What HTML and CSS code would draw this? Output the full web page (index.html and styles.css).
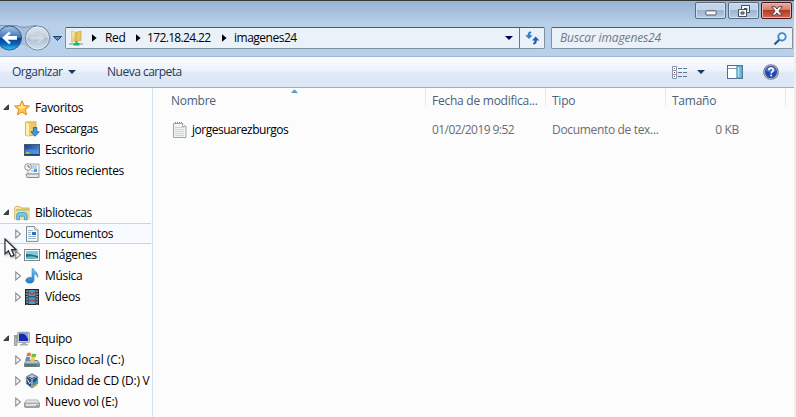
FILE: index.html
```html
<!DOCTYPE html>
<html lang="es">
<head>
<meta charset="utf-8">
<title>imagenes24</title>
<link rel="stylesheet" href="styles.css">
</head>
<body>
<svg width="0" height="0" class="defs" aria-hidden="true">
  <defs>
    <linearGradient id="gold" x1="0" y1="0" x2="1" y2="1"><stop offset="0" stop-color="#fff3b8"/><stop offset="1" stop-color="#e3b94c"/></linearGradient>
    <linearGradient id="blue" x1="0" y1="0" x2="1" y2="1"><stop offset="0" stop-color="#123d92"/><stop offset="1" stop-color="#5aa5e6"/></linearGradient>
    <linearGradient id="sky" x1="0" y1="0" x2="0" y2="1"><stop offset="0" stop-color="#6fc9ef"/><stop offset="1" stop-color="#1f78c4"/></linearGradient>
    <linearGradient id="ball" x1="0" y1="0" x2="0" y2="1"><stop offset="0" stop-color="#a8c6e8"/><stop offset=".48" stop-color="#3874bb"/><stop offset=".5" stop-color="#063d92"/><stop offset=".75" stop-color="#0b62bd"/><stop offset="1" stop-color="#31d0fa"/></linearGradient>
    <linearGradient id="glass" x1="0" y1="0" x2="0" y2="1"><stop offset="0" stop-color="#dce6f1"/><stop offset=".48" stop-color="#c3d0df"/><stop offset=".5" stop-color="#aabccf"/><stop offset="1" stop-color="#d4e2f0"/></linearGradient>
    <linearGradient id="metal" x1="0" y1="0" x2="0" y2="1"><stop offset="0" stop-color="#f4f4f4"/><stop offset="1" stop-color="#b4b8bb"/></linearGradient>
    <symbol id="open" viewBox="0 0 7 7"><path d="M5.5.8v4.7H.8z" fill="#454545" stroke="#222" stroke-width=".8"/></symbol>
    <symbol id="closed" viewBox="0 0 7 9"><path d="M1.5.9v7.2L5.7 4.5z" fill="#fff" stroke="#8e8e8e"/></symbol>
  </defs>
</svg>
<div class="window">
  <header class="titlebar">
    <div class="caption min"><svg width="12" height="6"><rect x=".8" y=".8" width="10.4" height="4.2" rx="1" fill="#f7f7f7" stroke="#525b68"/></svg></div>
    <div class="caption max"><svg width="13" height="12"><path d="M4.5.5h8v7h-3v4h-8v-7h3z" fill="#f4f6f8" stroke="#454e5c"/><path d="M7 3.5h3v2M4.5 4.5h5v3" fill="none" stroke="#454e5c"/><path d="M4 7h3v2H4z" fill="#8aa4c0" stroke="#454e5c"/></svg></div>
    <div class="caption close"><svg width="12" height="10"><path d="M.7.7h3.4L6 3 7.9.7h3.4L8 5l3.3 4.2H7.9L6 7 4.1 9.2H.7L4 5z" fill="#f7f3f2" stroke="#57424a"/></svg></div>
  </header>
  <div class="navbar">
    <svg class="history" width="65" height="30" viewBox="0 0 65 30">
      <path d="M0 3h37c9 0 14 5 14 12s-5 11-14 11c-9 0-10-4-15-4S10 27 0 26z" fill="#a9bed8"/>
      <path d="M0 2.5h15c4 0 5 2 9 2s6-2 13-2" fill="none" stroke="#7f98b8"/>
      <circle cx="9.5" cy="15" r="12" fill="url(#ball)" stroke="#36587f"/>
      <path d="M2 14.7l7-6 1.8 1.8L7.6 13H17v3.8H7.6l3.2 2.7L9 21.2z" fill="#fff"/>
      <circle cx="37.5" cy="15" r="12" fill="url(#glass)" stroke="#6e839e"/>
      <circle cx="37.5" cy="15" r="11" fill="none" stroke="#e9f1fa" opacity=".7"/>
      <path d="M45 14.7l-7-6-1.8 1.8 3.2 2.5H30v3.8h9.4l-3.2 2.7 1.8 1.7z" fill="#d0dae5" stroke="#b3c1d0" stroke-width=".6"/>
      <path d="M53.5 13.5h8l-4 4z" fill="#4f91c8" stroke="#153f70"/>
    </svg>
    <div class="address">
      <svg class="share" width="16" height="17" viewBox="0 0 16 17"><path d="M1 14h14" stroke="#b7c0c4" stroke-width="2"/><path d="M3.5.8L8 2.3V11l-4.5 1z" fill="url(#gold)" stroke="#d5b55a" stroke-width=".6"/><path d="M8 2.5L13 1v9.5L8 11z" fill="#e8c75d" stroke="#bd9b43" stroke-width=".6"/><path d="M7.5 11h2v2h2v2.5h-6V13h2z" fill="#1cb773"/></svg>
      <svg class="sep" width="5" height="8"><path d="M0 .2L4.6 4 0 7.8z"/></svg><span class="red">Red</span>
      <svg class="sep two" width="5" height="8"><path d="M0 .2L4.6 4 0 7.8z"/></svg><span class="ip">172.18.24.22</span>
      <svg class="sep three" width="5" height="8"><path d="M0 .2L4.6 4 0 7.8z"/></svg><span class="folder">imagenes24</span>
      <svg class="drop" width="8" height="4"><path d="M0 0h8L4 4z" fill="#00004d"/></svg>
      <div class="refresh"><svg width="15" height="14" viewBox="0 0 15 14"><path d="M5.8.4C3.3.6 2.6 2 2.6 4.2H.2L4 8.1l3.6-3.9H5.2c0-1.4.1-2.2 1.5-2.7z" fill="#2e83cc"/><path d="M8.5 13.4c2.5-.2 3.3-1.5 3.3-4h2.6L10.6 5.5 7 9.4h2.4c0 1.5-.2 2.2-1.5 2.7z" fill="#2460aa"/></svg></div>
    </div>
    <div class="search"><span>Buscar imagenes24</span><svg width="13" height="13" viewBox="0 0 13 13"><path d="M5.2 7.8L1.2 11.8" stroke="#2859a0" stroke-width="2.3" stroke-linecap="round"/><circle cx="8" cy="4.8" r="3.7" fill="#eef8ff" stroke="#3987c9" stroke-width="1.8"/></svg></div>
  </div>
  <div class="toolbar">
    <span class="organize">Organizar</span><svg class="tri" width="8" height="4"><path d="M0 0h8L4 4z" fill="#1e395b"/></svg>
    <span class="new">Nueva carpeta</span>
    <svg class="views" width="16" height="13" viewBox="0 0 16 13"><g fill="#fff" stroke="#8996aa"><path d="M.5.5h4v4h-4zM.5 4.5h4v4h-4zM.5 8.5h4v4h-4z"/></g><path d="M6 2.5h4m1 0h4m-9 4h4m1 0h4m-9 4h4m1 0h4" stroke="#607590"/><path d="M2 2.5h1M2 10.5h1" stroke="#3974a4"/><path d="M2 6.5h1" stroke="#e02020"/></svg>
    <svg class="tri views-drop" width="8" height="4"><path d="M0 0h8L4 4z" fill="#1e395b"/></svg>
    <svg class="preview" width="16" height="14" viewBox="0 0 16 14"><rect x=".5" y=".5" width="15" height="13" fill="#fff" stroke="#536c8c"/><path d="M1 3.5h9" stroke="#8194ae"/><rect x="9.8" y="1" width="5.2" height="12" fill="#70bfdd" stroke="#4a91b2" stroke-width=".8"/><path d="M11.5 2v10" stroke="#b7e4f3"/></svg>
    <svg class="help" width="16" height="16" viewBox="0 0 16 16"><circle cx="8" cy="8" r="7.3" fill="#d4d8df" stroke="#777f8b" stroke-width="1.1"/><circle cx="8" cy="8" r="5.9" fill="#1d48b5" stroke="#233a82" stroke-width=".6"/><path d="M2.8 7a5.3 5.3 0 0 1 10.4 0Q8 9 2.8 7z" fill="#6a8cdb" opacity=".6"/><path d="M5.8 6.2C5.8 3.5 10.4 3.5 10.4 6c0 1.6-2.2 1.7-2.2 3.4" stroke="#fff" stroke-width="1.7" fill="none"/><circle cx="8.2" cy="11.5" r="1" fill="#fff"/></svg>
  </div>
  <main class="content">
    <nav class="tree">
      <div class="row root"><svg class="twist"><use href="#open"/></svg><svg class="icon" viewBox="0 0 16 16"><path d="M8 .8l2.1 4.8 5.3.5-4 3.4 1.2 5.4L8 12.1l-4.6 2.8 1.2-5.4-4-3.4 5.3-.5z" fill="#ffc64a" stroke="#e08a25"/><path d="M8 2.8L9.2 6.6l3 .5L7.5 9 3 7l3.6-.4z" fill="#ffe79a"/></svg><span>Favoritos</span></div>
      <div class="row"><svg class="icon" viewBox="0 0 16 16"><path d="M1.5 1L12 .7V14l-8 1-2.5-1z" fill="#edcb68" stroke="#c69d3d" stroke-width=".7"/><path d="M2 1.2l3 2V15l-3-1z" fill="#fff0aa"/><path d="M9.4 6.5h3.4v4.3h2.5l-4.2 4.5-4.2-4.5h2.5z" fill="#3c9cdc" stroke="#1c5ba5" stroke-width=".8"/></svg><span class="tight">Descargas</span></div>
      <div class="row"><svg class="icon" viewBox="0 0 16 16"><rect x=".5" y="2.5" width="15" height="11" fill="url(#blue)" stroke="#485978"/><path d="M1 12.7h14" stroke="#152e57"/><path d="M1 8Q7 6 15 8.7V12H1z" fill="#5798e6" opacity=".6"/><path d="M2 10h2v2H2z" fill="#eca344"/><path d="M4 10h2v2H4z" fill="#75c454"/></svg><span>Escritorio</span></div>
      <div class="row"><svg class="icon" viewBox="0 0 16 16"><path d="M6 1h9v10H4V6z" fill="#f6f8fb" stroke="#8c969f" stroke-width=".8"/><path d="M7 3h6M7 5h6M7 8h3" stroke="#8bb1d5"/><path d="M10 6h3v3h-3z" fill="#4c9ee0"/><path d="M2 11h13v3.5H3z" fill="#e3e7ea" stroke="#858d93"/><circle cx="4" cy="4" r="3.3" fill="#f7f7f7" stroke="#8e9498"/><path d="M4 2v2h2" stroke="#647080" fill="none"/></svg><span>Sitios recientes</span></div>
      <div class="row gap"></div>
      <div class="row root"><svg class="twist"><use href="#open"/></svg><svg class="icon" viewBox="0 0 16 16"><path d="M.7 3l1-1.5h4L7 3h8v11H.7z" fill="url(#gold)" stroke="#c9a34a" stroke-width=".8"/><path d="M2 4h12v2H2z" fill="#b4cf7b"/><path d="M1 6h14v8H1z" fill="#f5e197"/><path d="M2.7 14.8V10q0-2.5 3-2.5h4.5q3 0 3 2.5v4.8h-2.8v-3.6H5.6v3.6z" fill="#78c6e8" stroke="#4296bd" stroke-width=".8"/></svg><span>Bibliotecas</span></div>
      <div class="row selected"><svg class="twist"><use href="#closed"/></svg><svg class="icon" viewBox="0 0 16 16"><path d="M2.5.6h8L14 4v11.4H2.5z" fill="#fafafa" stroke="#7d8790"/><path d="M10.5.6V4H14" fill="#dce3e7" stroke="#929a9f" stroke-width=".7"/><path d="M4 4.5h5M4 6.5h3M4 8.5h3M4 10.5h8M4 12.5h8" stroke="#9bb7ce"/><path d="M8 6h4v3H8z" fill="#2870b9"/></svg><span>Documentos</span></div>
      <div class="row"><svg class="twist"><use href="#closed"/></svg><svg class="icon" viewBox="0 0 16 16"><rect x=".5" y="2.5" width="15" height="11" fill="#fff" stroke="#7f8789"/><path d="M2 4h12v8H2z" fill="#83cae7"/><path d="M2 7q5 0 12 2v3H2z" fill="#246d73"/><path d="M2 10q7-2 12 1v1H2z" fill="#6fbad0"/></svg><span>Imágenes</span></div>
      <div class="row"><svg class="twist"><use href="#closed"/></svg><svg class="icon" viewBox="0 0 16 16"><path d="M8 .7h1.7c.5 2.8 4.7 3.3 4.1 8.8-.5-2-2-3.2-3.7-3.5V12c0 2-1.7 3.2-4.4 3.2-2.3 0-4-1.1-4-2.7 0-2.5 3.5-4 6.3-2.9z" fill="url(#sky)" stroke="#2b79b9" stroke-width=".5"/></svg><span>Música</span></div>
      <div class="row"><svg class="twist"><use href="#closed"/></svg><svg class="icon" viewBox="0 0 16 16"><rect x="1.5" y=".5" width="13" height="15" fill="#30363d" stroke="#22272c"/><path d="M4.5 1h7v14h-7z" fill="#4a9bd2"/><path d="M5 2l3 2 3-2v3L8 6 5 5zM5 10l3 1 3-1v3l-3-1-3 1z" fill="#ae513f"/><path d="M4 7.8h8" stroke="#263b50"/><path d="M3 1.5v14M13 1.5v14" stroke="#e8ecee" stroke-dasharray="1.5 1.2"/></svg><span>Vídeos</span></div>
      <div class="row gap"></div>
      <div class="row root"><svg class="twist"><use href="#open"/></svg><svg class="icon" viewBox="0 0 16 16"><rect x="3.8" y="1.3" width="11.5" height="10" rx=".5" fill="#d9dfdf" stroke="#8d979b"/><path d="M5 2.5h9v7.5H5z" fill="#1829b6"/><path d="M9 2.5h5v5q-2-4-5-5z" fill="#7aacef"/><path d="M8 11.5h4V13h2v1.5H6V13h2z" fill="#a9b1b5"/><rect x=".5" y="4.5" width="2.5" height="10" fill="#b4bec1" stroke="#747e81" stroke-width=".6"/><path d="M1 6h1.5" stroke="#47bc46"/></svg><span>Equipo</span></div>
      <div class="row"><svg class="twist"><use href="#closed"/></svg><svg class="icon" viewBox="0 0 16 16"><path d="M2.5 8.5h11l2 3v3H.5v-3z" fill="#b5c1c6" stroke="#5f6b70" stroke-width=".8"/><path d="M1 11.5h14v3H1z" fill="#53767f"/><path d="M13 13h1.5" stroke="#54ef6b"/><path d="M3.2 1.2Q5 0 7.3 1.3L6.5 4.6Q4.5 3.5 2.2 4.8z" fill="#e97a3e"/><path d="M8 1.6q2 1 4.5 0l-1 3.5q-2 1-4.3 0z" fill="#71bd3f"/><path d="M2 5.4q2-1.2 4.2-.2L5.5 8.7Q3 7.6 1 9z" fill="#4c92da"/><path d="M7 5.8q2 1 4.2 0l-1 3.3q-2 1-4 0z" fill="#f1c83c"/></svg><span class="loose">Disco local (C:)</span></div>
      <div class="row"><svg class="twist"><use href="#closed"/></svg><svg class="icon" viewBox="0 0 16 16"><path d="M8 .7l5.7 3v7L8 15l-5.7-4.3v-7z" fill="#254870" stroke="#8498ae"/><path d="M3 4l5 3 5-3-5-2.5z" fill="#b9ccdd"/><path d="M4.5 4L8 5.5 11.5 4" stroke="#254870" fill="none"/><path d="M8 7v7M3.5 6.5l2 4L7 9.5" stroke="#eff6fc" fill="none"/><path d="M9 10l4-3v4l-3.5 3z" fill="#2c9bd2"/><path d="M9 14l4-2.5" stroke="#e9a72e" stroke-width="1.5"/></svg><span class="cd">Unidad de CD (D:) V</span></div>
      <div class="row"><svg class="twist"><use href="#closed"/></svg><svg class="icon" viewBox="0 0 16 16"><path d="M2.5 6h11l2 3v3.5q0 1-1 1h-13q-1 0-1-1V9z" fill="url(#metal)" stroke="#959b9e" stroke-width=".8"/><path d="M1 9.2h14v3.5H1z" fill="#dcdfe0" stroke="#777f82" stroke-width=".7"/><path d="M12 11.5h2" stroke="#39c74e"/></svg><span class="vol">Nuevo vol (E:)</span></div>
    </nav>
    <section class="files">
      <div class="head">
        <div class="c-name">Nombre<svg class="sort" width="7" height="4"><path d="M0 4L3.5.2 7 4z" fill="#5a9abf"/></svg></div><div class="c-date">Fecha de modifica...</div><div class="c-type">Tipo</div><div class="c-size">Tamaño</div>
      </div>
      <div class="file">
        <div class="c-name"><svg width="14" height="16" viewBox="0 0 14 16"><path d="M.5 1.5h9l3.5 3v11H.5z" fill="#f1f4f5" stroke="#9ea4a4"/><path d="M2 .5h1m1 0h1m1 0h1m1 0h1" stroke="#888"/><path d="M2 5.5h9M2 7.5h9M2 9.5h9M2 11.5h9M2 13.5h9" stroke="#c5d6dd"/><path d="M9.5 1.5v3H13" fill="#fff" stroke="#a6abab"/></svg><span>jorgesuarezburgos</span></div><div class="c-date">01/02/2019 9:52</div><div class="c-type">Documento de tex...</div><div class="c-size">0 KB</div>
      </div>
    </section>
  </main>
</div>
<svg class="cursor" width="14" height="21" viewBox="0 0 14 21"><path d="M1 1v15l3.5-3.2L7 18.5l3-1.3-2.5-5.5H12z" fill="#fff" stroke="#29293c" stroke-width="1.2"/></svg>
</body>
</html>
```

FILE: styles.css
```css
* { box-sizing: border-box; }
body { margin: 0; width: 796px; height: 417px; overflow: hidden; background: #f0eeeb; font: 12px/20px "Open Sans", "Noto Sans", sans-serif; letter-spacing: -.33px; color: #000; white-space: nowrap; }
svg { display: block; flex: none; }
.defs { position: absolute; }
.window { width: 794px; height: 417px; background: #b9d1ea; display: flex; flex-direction: column; }
.titlebar { height: 27px; flex: none; border-top: 1px solid #373737; background: linear-gradient(#98b3d2, #b9d0e9 90%); display: flex; justify-content: flex-end; gap: 2px; padding: 1px 2px 0 0; }
.caption { width: 31px; height: 17px; border: 1px solid #566b87; border-radius: 2px; box-shadow: inset 0 0 0 1px #d3e0ef; background: linear-gradient(#c4d5e8 0 45%, #9bb5d0 50%, #b7cde5); display: flex; align-items: center; justify-content: center; }
.min { padding-top: 5px; }
.close { border-color: #4b1722; background: linear-gradient(#e9ada2 0, #d77b6a 45%, #b93720 50%, #cf6c53); box-shadow: inset 0 0 0 1px #e7b3aa; }
.navbar { height: 30px; flex: none; display: flex; background: linear-gradient(#b9d0e9, #b8d1eb); border-bottom: 1px solid #9fb7d3; }
.history { margin-top: -4px; }
.address, .search { height: 22px; background: #eaf1f9; border: 1px solid #828f9f; border-top-color: #4f5c6c; border-radius: 2px; display: flex; align-items: center; }
.address { width: 480px; }
.share { margin: 1px 0 0 2px; }
.sep { margin-left: 8px; }
.red { margin-left: 8px; width: 23px; }
.two { margin-left: 8px; }
.ip { margin-left: 6px; width: 67px; letter-spacing: -.65px; }
.three { margin-left: 8px; }
.folder { margin-left: 7px; letter-spacing: -.5px; }
.drop { margin-left: auto; }
.refresh { width: 25px; height: 20px; margin-left: 6px; border-left: 1px solid #697789; display: flex; align-items: center; justify-content: center; }
.search { width: 242px; margin-left: 6px; padding: 0 5px 0 8px; justify-content: space-between; color: #747980; font-style: italic; letter-spacing: -.12px; }
.toolbar { height: 31px; flex: none; display: flex; align-items: center; padding: 0 15px 0 12px; background: linear-gradient(#fbfdff, #edf3fc 45%, #dfe8f6 55%, #dce7f6); border-bottom: 1px solid #9baec8; color: #1e395b; letter-spacing: -.5px; }
.organize { width: 53px; }
.tri { margin-left: 3px; }
.new { margin-left: 31px; }
.views { margin-left: auto; }
.views-drop { margin-left: 9px; }
.preview { margin-left: 22px; }
.help { margin-left: 20px; }
.content { flex: 1; display: flex; min-height: 0; background: #fcfcfc; }
.tree { width: 153px; flex: none; padding: 9px 1px 0 0; border-right: 1px solid #d5e4f4; overflow: hidden; }
.row { height: 21px; display: flex; align-items: center; padding-left: 13px; overflow: hidden; }
.row .icon { width: 16px; height: 16px; margin-right: 5px; }
.row > .icon:first-child { margin-left: 11px; }
.row .twist { width: 8px; height: 10px; margin-right: 3px; }
.root { padding-left: 3px; }
.root .twist { width: 7px; height: 7px; margin-right: 4px; }
.row:not(.root) .twist { margin-left: 1px; margin-right: 2px; }
.tight { letter-spacing: -.5px; }
.loose { letter-spacing: -.05px; }
.cd { letter-spacing: -.26px; }
.vol { letter-spacing: -.22px; }
.selected { background: #f7faff; border: solid #bad8f5; border-width: 1px 0; }
.files { flex: 1; }
.head { height: 26px; display: flex; color: #4c607a; line-height: 25px; letter-spacing: -.25px; }
.head > div { border-right: 1px solid; border-image: linear-gradient(#d8e5f2 0, #e8f0f8 65%, transparent 80%) 1; }
.c-name { width: 273px; padding-left: 18px; position: relative; }
.c-date { width: 120px; padding-left: 6px; }
.c-type { width: 120px; padding-left: 6px; }
.c-size { width: 120px; padding-left: 6px; }
.sort { position: absolute; left: 138px; top: 1px; }
.file { display: flex; height: 21px; margin-top: 5px; line-height: 22px; color: #6d6d6d; }
.file .c-name { display: flex; align-items: center; gap: 5px; padding-left: 20px; color: #000; letter-spacing: -.48px; }
.file .c-date { letter-spacing: -.57px; }
.file .c-size { text-align: right; padding-right: 47px; }
.cursor { position: absolute; left: 4px; top: 238px; filter: drop-shadow(1px 1px 1px #0006); }
```
